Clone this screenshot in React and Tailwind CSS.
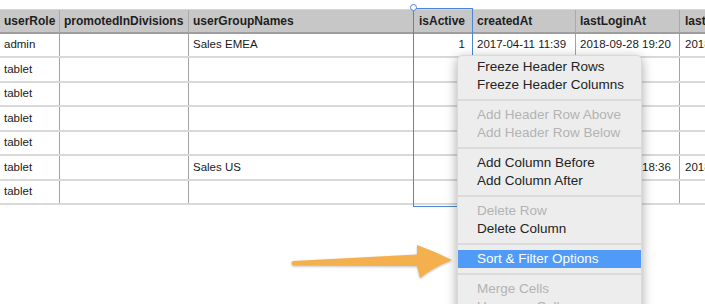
import React from "react";

const cols = [
  { w: "w-[60px]", key: "userRole", pad: "pl-[4px]" },
  { w: "w-[129px]", key: "promotedInDivisions", pad: "pl-[4px]" },
  { w: "w-[225px]", key: "userGroupNames", pad: "pl-[4px]" },
  { w: "w-[59px]", key: "isActive", pad: "justify-end pr-[7px]" },
  { w: "w-[103px]", key: "createdAt", pad: "pl-[4px]" },
  { w: "w-[104px]", key: "lastLoginAt", pad: "pl-[4px]" },
  { w: "w-[120px]", key: "lastUpdatedAt", pad: "pl-[5px]" },
];

const rows = [
  { h: "h-[24px]", v: ["admin", "", "Sales EMEA", "1", "2017-04-11 11:39", "2018-09-28 19:20", "2018-09-28 19:20"] },
  { h: "h-[25px]", v: ["tablet", "", "", "", "", "", ""] },
  { h: "h-[24px]", v: ["tablet", "", "", "", "", "", ""] },
  { h: "h-[25px]", v: ["tablet", "", "", "", "", "", ""] },
  { h: "h-[24px]", v: ["tablet", "", "", "", "", "", ""] },
  { h: "h-[25px]", v: ["tablet", "", "Sales US", "", "", "2018-09-28 18:36", "2018-09-28 18:36"] },
  { h: "h-[24px]", v: ["tablet", "", "", "", "", "", ""] },
];

const menu = [
  { t: "Freeze Header Rows" },
  { t: "Freeze Header Columns" },
  { sep: true },
  { t: "Add Header Row Above", dis: true },
  { t: "Add Header Row Below", dis: true },
  { sep: true },
  { t: "Add Column Before" },
  { t: "Add Column After" },
  { sep: true },
  { t: "Delete Row", dis: true },
  { t: "Delete Column" },
  { sep: true },
  { t: "Sort & Filter Options", hi: true },
  { sep: true },
  { t: "Merge Cells", dis: true },
  { t: "Unmerge Cells", dis: true },
];

export default function App() {
  return (
    <div
      className="relative w-[705px] h-[304px] overflow-hidden bg-white"
      style={{ fontFamily: '"Liberation Sans", Arial, sans-serif' }}
    >
      <div className="pt-[9px] w-[800px]">
        {/* header */}
        <div className="flex h-[25px] border-t border-b-2 border-t-[#d6d6d6] border-b-[#9e9e9e] bg-[#c7c7c7]">
          {cols.map((c) => (
            <div
              key={c.key}
              className={`${c.w} ${c.pad} shrink-0 h-full border-r border-[#a9a9a9] flex items-center text-[12px] font-bold text-[#1e1e1e]`}
            >
              {c.key}
            </div>
          ))}
        </div>
        {/* rows */}
        {rows.map((r, i) => (
          <div key={i} className={`flex ${r.h} border-b-2 border-[#d9d9d9]`}>
            {cols.map((c, j) => (
              <div
                key={c.key}
                className={`${c.w} ${c.pad} shrink-0 h-full border-r border-[#a3a3a3] flex items-center text-[11.5px] text-[#1a1a1a] whitespace-nowrap overflow-hidden`}
              >
                {r.v[j]}
              </div>
            ))}
          </div>
        ))}
      </div>

      {/* column selection */}
      <div className="absolute left-[413px] top-[8px] w-[60px] h-[199px] border border-[#4c86d6]" />
      <div className="absolute left-[410px] top-[4px] w-[7px] h-[7px] rounded-full border border-[#4c86d6] bg-white" />

      {/* context menu */}
      <div className="absolute left-[457px] top-[55px] w-[185px] h-[270px] bg-[#ededed] rounded-t-[5px] pt-[2px] shadow-[0_3px_12px_rgba(0,0,0,0.35)] border border-[#dadada]">
        {menu.map((m, i) =>
          m.sep ? (
            <div key={i} className="h-[12px] flex items-center">
              <div className="w-full h-[2px] bg-[#dadada]" />
            </div>
          ) : (
            <div
              key={i}
              className={`h-[18px] flex items-center pl-[19px] text-[13.5px] whitespace-nowrap ${
                m.hi ? "bg-[#4f9bf7] text-white" : m.dis ? "text-[#b3b3b3]" : "text-[#232323]"
              }`}
            >
              {m.t}
            </div>
          )
        )}
      </div>

      {/* arrow */}
      <svg
        className="absolute left-[285px] top-[238px]"
        width="172"
        height="48"
        viewBox="285 238 172 48"
        style={{ filter: "drop-shadow(0px 1px 1px rgba(0,0,0,0.25))" }}
      >
        <path
          d="M293,261 L417,254.5 L417,245 Q436,252 452,260 Q434,267 420,278 L417,266 L293,265.5 Q290,263.2 293,261 Z"
          fill="#f3b04d"
        />
      </svg>
    </div>
  );
}
